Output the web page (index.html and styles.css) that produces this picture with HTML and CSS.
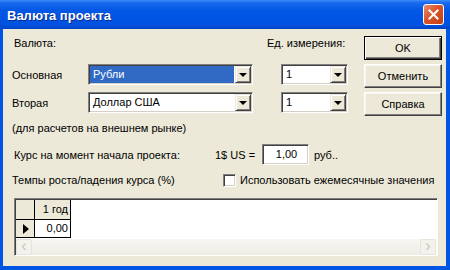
FILE: index.html
```html
<!DOCTYPE html>
<html lang="ru">
<head>
    <meta charset="UTF-8">
    <title>Валюта проекта</title>
    <link rel="stylesheet" href="styles.css">
</head>
<body>
    <div class="window">
        <div class="titlebar">
            <span class="title">Валюта проекта</span>
            <button class="close-btn" aria-label="Закрыть">
                <svg width="21" height="21" viewBox="0 0 21 21">
                    <path d="M6 6 L15 15 M15 6 L6 15" stroke="#fff" stroke-width="2.2" stroke-linecap="square"/>
                </svg>
            </button>
        </div>

        <div class="dialog">
            <div class="top">
                <div class="form">
                    <div class="lbl lbl-head">Валюта:</div>
                    <div class="lbl lbl-units">Ед. измерения:</div>

                    <div class="lbl">Основная</div>
                    <div class="combo">
                        <span class="combo-value selected">Рубли</span>
                        <span class="drop"></span>
                    </div>
                    <div class="combo combo-unit">
                        <span class="combo-value">1</span>
                        <span class="drop"></span>
                    </div>

                    <div class="lbl">Вторая</div>
                    <div class="combo">
                        <span class="combo-value">Доллар США</span>
                        <span class="drop"></span>
                    </div>
                    <div class="combo combo-unit">
                        <span class="combo-value">1</span>
                        <span class="drop"></span>
                    </div>
                </div>

                <div class="buttons">
                    <button class="btn default">OK</button>
                    <button class="btn">Отменить</button>
                    <button class="btn">Справка</button>
                </div>
            </div>

            <div class="note">(для расчетов на внешнем рынке)</div>

            <div class="rate-row">
                <span class="rate-label">Курс на момент начала проекта:</span>
                <span class="rate-unit">1$ US =</span>
                <span class="edit">1,00</span>
                <span class="rate-suffix">руб..</span>
            </div>

            <div class="growth-row">
                <span class="growth-label">Темпы роста/падения курса (%)</span>
                <span class="checkbox"></span>
                <span>Использовать ежемесячные значения</span>
            </div>

            <div class="grid">
                <div class="grid-row grid-head">
                    <span class="cell ind"></span>
                    <span class="cell col fixed">1 год</span>
                </div>
                <div class="grid-row">
                    <span class="cell ind"><span class="arrow"></span></span>
                    <span class="cell col">0,00</span>
                </div>
                <div class="grid-fill"></div>
                <div class="hscroll">
                    <span class="sbtn">&lsaquo;</span>
                    <span class="sbtn">&rsaquo;</span>
                </div>
            </div>
        </div>
    </div>
</body>
</html>
```

FILE: styles.css
```css
body {
    margin: 0;
    font-family: "Liberation Sans", Arial, sans-serif;
    font-size: 11px;
    color: #000;
    background: #fff;
}
.window {
    width: 450px;
    height: 270px;
    box-sizing: border-box;
    padding: 0 4px 4px 3px;
    background: #0055e5;
    display: flex;
    flex-direction: column;
}
.titlebar {
    height: 29px;
    margin: 0 -4px 0 -3px;
    padding: 0 6px 0 7px;
    display: flex;
    align-items: center;
    justify-content: space-between;
    background: linear-gradient(#3d8cf7 0, #1669ee 3px, #0558e4 10px, #0155e5 50%, #0052e0 85%, #0044c4 100%);
}
.title {
    font-weight: bold;
    font-size: 13px;
    color: #fff;
    text-shadow: 1px 1px 0 #0a2a8a;
    margin-top: 1px;
}
.close-btn {
    width: 21px;
    height: 21px;
    padding: 0;
    margin-top: 0;
    border: 1px solid #fff;
    border-radius: 3px;
    background: linear-gradient(135deg, #e98d6f 0, #d9542a 45%, #c63d12 100%);
    display: flex;
    align-items: center;
    justify-content: center;
}
.close-btn svg {
    display: block;
}
.dialog {
    flex: 1;
    background: #ece9d8;
    padding: 0 4px 0 9px;
    display: flex;
    flex-direction: column;
}
.top {
    display: flex;
    justify-content: space-between;
    padding-top: 7px;
}
.form {
    display: grid;
    grid-template-columns: 76px 165px 28px 67px;
    grid-template-rows: 21px 21px 21px;
    row-gap: 7px;
    align-items: center;
}
.lbl {
    line-height: 14px;
}
.lbl-head {
    grid-column: 1 / 3;
    align-self: start;
    padding-left: 2px;
}
.lbl-units {
    grid-column: 3 / 5;
    align-self: start;
    padding-left: 14px;
}
.combo {
    height: 21px;
    box-sizing: border-box;
    border: 1px solid;
    border-color: #808080 #fff #fff #808080;
    box-shadow: inset 1px 1px 0 #404040, inset -1px -1px 0 #d4d0c8;
    background: #fff;
    display: flex;
    padding: 1px;
}
.combo-unit {
    grid-column: 4;
}
.combo:not(.combo-unit) {
    grid-column: 2;
}
.combo-value {
    flex: 1;
    line-height: 17px;
    padding-left: 3px;
    margin-right: 1px;
}
.combo-value.selected {
    background: #316ac5;
    color: #fff;
}
.drop {
    width: 16px;
    box-sizing: border-box;
    border: 1px solid;
    border-color: #ece9d8 #404040 #404040 #ece9d8;
    box-shadow: inset 1px 1px 0 #fff, inset -1px -1px 0 #808080;
    background: #ece9d8;
    display: flex;
    align-items: center;
    justify-content: center;
}
.drop::after {
    content: "";
    border-left: 4px solid transparent;
    border-right: 4px solid transparent;
    border-top: 4px solid #000;
    margin-top: 1px;
}
.buttons {
    display: flex;
    flex-direction: column;
    gap: 4px;
    width: 78px;
}
.btn {
    height: 24px;
    box-sizing: border-box;
    font: inherit;
    color: #000;
    background: #ece9d8;
    border: 1px solid;
    border-color: #fff #404040 #404040 #fff;
    box-shadow: inset -1px -1px 0 #808080, inset 1px 1px 0 #f6f5ee;
    padding: 0;
}
.btn.default {
    border: 1px solid #000;
    box-shadow: inset 1px 1px 0 #fff, inset -1px -1px 0 #404040, inset -2px -2px 0 #808080;
}
.note {
    line-height: 14px;
    margin-top: 5px;
}
.rate-row {
    display: flex;
    align-items: center;
    height: 21px;
    margin-top: 9px;
}
.rate-label {
    width: 203px;
    padding-left: 2px;
    box-sizing: border-box;
}
.rate-unit {
    width: 47px;
}
.edit {
    width: 47px;
    height: 21px;
    box-sizing: border-box;
    border: 1px solid;
    border-color: #808080 #fff #fff #808080;
    box-shadow: inset 1px 1px 0 #404040, inset -1px -1px 0 #d4d0c8;
    background: #fff;
    line-height: 19px;
    text-align: center;
    padding-left: 2px;
}
.rate-suffix {
    margin-left: 5px;
}
.growth-row {
    display: flex;
    align-items: center;
    height: 14px;
    margin-top: 8px;
}
.growth-label {
    width: 211px;
}
.checkbox {
    width: 13px;
    height: 13px;
    box-sizing: border-box;
    border: 1px solid;
    border-color: #808080 #fff #fff #808080;
    box-shadow: inset 1px 1px 0 #404040, inset -1px -1px 0 #d4d0c8;
    background: #fff;
    margin-right: 4px;
}
.grid {
    margin: 11px 0 0 2px;
    width: 424px;
    height: 58px;
    box-sizing: border-box;
    border: 1px solid;
    border-color: #808080 #fff #fff #808080;
    box-shadow: inset 1px 1px 0 #404040;
    background: #fff;
    padding: 1px 0 0 1px;
    display: flex;
    flex-direction: column;
}
.grid-row {
    display: flex;
    height: 18px;
}
.grid-head {
    height: 20px;
}
.cell {
    box-sizing: border-box;
    border-right: 1px solid #000;
    border-bottom: 1px solid #000;
    line-height: 17px;
}
.ind {
    width: 19px;
    background: #ece9d8;
    display: flex;
    align-items: center;
    justify-content: center;
}
.col {
    width: 36px;
    text-align: right;
    padding-right: 2px;
}
.grid-head .cell {
    line-height: 19px;
}
.col.fixed {
    background: #ece9d8;
}
.arrow {
    border-top: 5px solid transparent;
    border-bottom: 5px solid transparent;
    border-left: 6px solid #000;
    margin-left: 2px;
}
.grid-fill {
    flex: 1;
}
.hscroll {
    height: 16px;
    display: flex;
    justify-content: space-between;
    background: linear-gradient(#f7f6f1, #eeede5);
    margin-right: 1px;
}
.sbtn {
    width: 16px;
    box-sizing: border-box;
    border: 1px solid #e6e4dc;
    border-radius: 2px;
    background: #f3f2ec;
    color: #c7c5bd;
    font-size: 16px;
    line-height: 12px;
    text-align: center;
}
```
